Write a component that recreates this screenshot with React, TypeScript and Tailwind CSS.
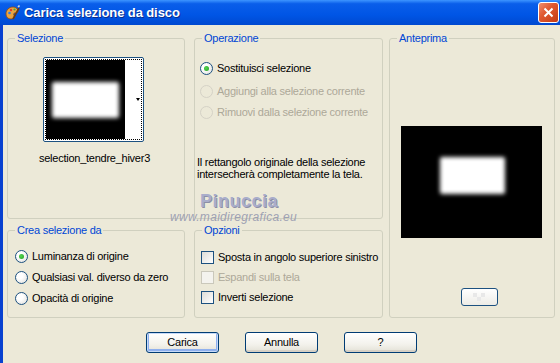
import type { ReactNode } from 'react'

function Radio({ checked, disabled }: { checked?: boolean; disabled?: boolean }) {
  return (
    <span
      className={
        'relative inline-flex h-[13px] w-[13px] shrink-0 items-center justify-center rounded-full border ' +
        (disabled
          ? 'border-[#D5D2C6] bg-[#ECE9D8]'
          : 'border-[#1C5180] bg-[radial-gradient(circle_at_35%_35%,#ffffff_30%,#DCDCD7_100%)]')
      }
    >
      {checked && <span className="h-[5px] w-[5px] rounded-full bg-[radial-gradient(circle_at_40%_40%,#55D451,#21A121)]" />}
    </span>
  )
}

function Check({ disabled }: { disabled?: boolean }) {
  return (
    <span
      className={
        'inline-block h-[13px] w-[13px] shrink-0 border ' +
        (disabled
          ? 'border-[#CAC8BB] bg-[#F4F3EE]'
          : 'border-[#1C5180] bg-[linear-gradient(135deg,#DCDCD7,#ffffff)]')
      }
    />
  )
}

function Group({ title, className, children }: { title: string; className?: string; children?: ReactNode }) {
  return (
    <fieldset className={'min-w-0 rounded-[3px] border border-[#D0D0BF] p-0 ' + (className ?? '')}>
      <legend className="ml-[7px] px-[2px] leading-[13px] text-[#0046D5]">{title}</legend>
      {children}
    </fieldset>
  )
}

function Button({ children, focused }: { children: ReactNode; focused?: boolean }) {
  return (
    <button
      className={
        'h-[21px] w-[73px] rounded-[3px] border border-[#003C74] bg-[linear-gradient(#ffffff,#F3F2EC_60%,#E3E1D6)] leading-none text-black ' +
        (focused ? 'shadow-[inset_0_0_0_1px_#C6DAF8,inset_0_-1px_0_2px_#8FB0EE]' : 'shadow-[inset_0_-2px_0_#D6D0C5]')
      }
    >
      {children}
    </button>
  )
}

export default function App() {
  return (
    <div className="relative flex h-[363px] w-[560px] flex-col overflow-hidden bg-[#ECE9D8] font-['Liberation_Sans',Arial,sans-serif] text-[11px] tracking-[-0.25px] text-black">
      {/* title bar */}
      <div className="flex h-[25px] items-center bg-[linear-gradient(#3D95FF,#0A5EEA_15%,#0055E5_60%,#0049D0)] pl-[4px] pr-[1px]">
        <svg width="16" height="16" viewBox="0 0 16 16" className="shrink-0">
          <path d="M2 9c0-4 3-7 7-7 3 0 5 2 5 4 0 2-2 2-3 2s-2 1-1 2c1 2-1 4-3 4C4 14 2 12 2 9z" fill="#E9A443" stroke="#8A4A12" strokeWidth="0.8" />
          <circle cx="5.5" cy="8" r="1.3" fill="#2E7BE6" />
          <circle cx="7" cy="5" r="1.2" fill="#E23B2B" />
          <circle cx="10.5" cy="4.5" r="1.1" fill="#3CB043" />
          <path d="M9 14 L15 3" stroke="#6B3A12" strokeWidth="1.6" />
          <path d="M14 2 L15.5 0.5" stroke="#D8D8D8" strokeWidth="1.6" />
        </svg>
        <span className="ml-[4px] text-[13px] font-bold tracking-[-0.1px] text-white [text-shadow:1px_1px_0_#0A2E8C]">Carica selezione da disco</span>
        <div className="ml-auto flex h-[21px] w-[21px] items-center justify-center rounded-[3px] border border-white bg-[linear-gradient(135deg,#F08E6F,#E05A32_40%,#C43A12)]">
          <svg width="11" height="11" viewBox="0 0 11 11">
            <path d="M1.5 1.5 L9.5 9.5 M9.5 1.5 L1.5 9.5" stroke="white" strokeWidth="2" />
          </svg>
        </div>
      </div>

      {/* body */}
      <div className="flex flex-1 flex-col border-l-[3px] border-[#0841D0] pl-[4px] pt-[7px]">
        <div className="grid grid-cols-[182px_200px_166px] grid-rows-[187px_94px] gap-y-[5px]">
          <Group title="Selezione" className="mr-[4px]">
            <div className="ml-[35px] mt-[12px] flex h-[85px] w-[101px] rounded-[2px] border border-[#1C5180] bg-white p-[1px]">
              <div className="flex flex-1 border border-dotted border-black">
                <div className="flex w-[79px] items-center justify-center bg-black">
                  <div className="h-[36px] w-[67px] rounded-[2px] bg-white blur-[2px]" />
                </div>
                <div className="flex flex-1 items-center justify-end bg-white pr-[1px]">
                  <div className="h-0 w-0 border-x-[2px] border-t-[3px] border-x-transparent border-t-black" />
                </div>
              </div>
            </div>
            <div className="ml-[-3px] mt-[10px] text-center leading-[13px]">selection_tendre_hiver3</div>
          </Group>

          <Group title="Operazione" className="ml-[5px] mr-[6px]">
            <div className="ml-[5px] mt-[17px] flex flex-col">
              <div className="flex h-[13px] items-center gap-[4px]">
                <Radio checked />
                <span>Sostituisci selezione</span>
              </div>
              <div className="mt-[10px] flex h-[13px] items-center gap-[4px] text-[#ACA899]">
                <Radio disabled />
                <span>Aggiungi alla selezione corrente</span>
              </div>
              <div className="mt-[8px] flex h-[13px] items-center gap-[4px] text-[#ACA899]">
                <Radio disabled />
                <span>Rimuovi dalla selezione corrente</span>
              </div>
            </div>
            <p className="ml-[2px] mt-[37px] leading-[12px]">
              Il rettangolo originale della selezione
              <br />
              intersecherà completamente la tela.
            </p>
          </Group>

          <Group title="Anteprima" className="row-span-2">
            <div className="ml-[11px] mt-[81px] flex h-[112px] w-[141px] items-start justify-start bg-black">
              <div className="ml-[39px] mt-[31px] h-[37px] w-[65px] rounded-[2px] bg-white blur-[2px]" />
            </div>
            <div className="ml-[71px] mt-[50px] flex h-[18px] w-[37px] items-center justify-center rounded-[3px] border border-[#1C5180] bg-[linear-gradient(#ffffff,#EDECE6)]">
              <svg width="18" height="10" viewBox="0 0 18 10">
                <rect x="2" y="1" width="4" height="4" fill="#E8E8E8" />
                <rect x="10" y="1" width="4" height="4" fill="#E8E8E8" />
                <rect x="6" y="5" width="4" height="4" fill="#E8E8E8" />
              </svg>
            </div>
          </Group>

          <Group title="Crea selezione da" className="mr-[4px]">
            <div className="ml-[7px] mt-[13px] flex flex-col gap-[8px]">
              <div className="flex h-[13px] items-center gap-[4px]">
                <Radio checked />
                <span>Luminanza di origine</span>
              </div>
              <div className="flex h-[13px] items-center gap-[4px]">
                <Radio />
                <span>Qualsiasi val. diverso da zero</span>
              </div>
              <div className="flex h-[13px] items-center gap-[4px]">
                <Radio />
                <span>Opacità di origine</span>
              </div>
            </div>
          </Group>

          <Group title="Opzioni" className="ml-[5px] mr-[6px]">
            <div className="ml-[6px] mt-[14px] flex flex-col gap-[7px] whitespace-nowrap">
              <div className="flex h-[13px] items-center gap-[4px]">
                <Check />
                <span>Sposta in angolo superiore sinistro</span>
              </div>
              <div className="flex h-[13px] items-center gap-[4px] text-[#ACA899]">
                <Check disabled />
                <span>Espandi sulla tela</span>
              </div>
              <div className="flex h-[13px] items-center gap-[4px]">
                <Check />
                <span>Inverti selezione</span>
              </div>
            </div>
          </Group>
        </div>

        <div className="mt-[14px] flex justify-center gap-[26px] pr-[4px]">
          <Button focused>Carica</Button>
          <Button>Annulla</Button>
          <Button>?</Button>
        </div>
      </div>

      {/* watermark */}
      <div className="pointer-events-none absolute left-[200px] top-[192px] text-[18px] font-bold leading-[18px] tracking-[0.5px] text-[#A9ADCB] [text-shadow:1px_1px_0_#8C8FA6]">
        Pinuccia
      </div>
      <div className="pointer-events-none absolute left-[170px] top-[212px] text-[12px] italic leading-[11px] tracking-[0.3px] text-[#9EA1B3]">
        www.maidiregrafica.eu
      </div>
    </div>
  )
}
